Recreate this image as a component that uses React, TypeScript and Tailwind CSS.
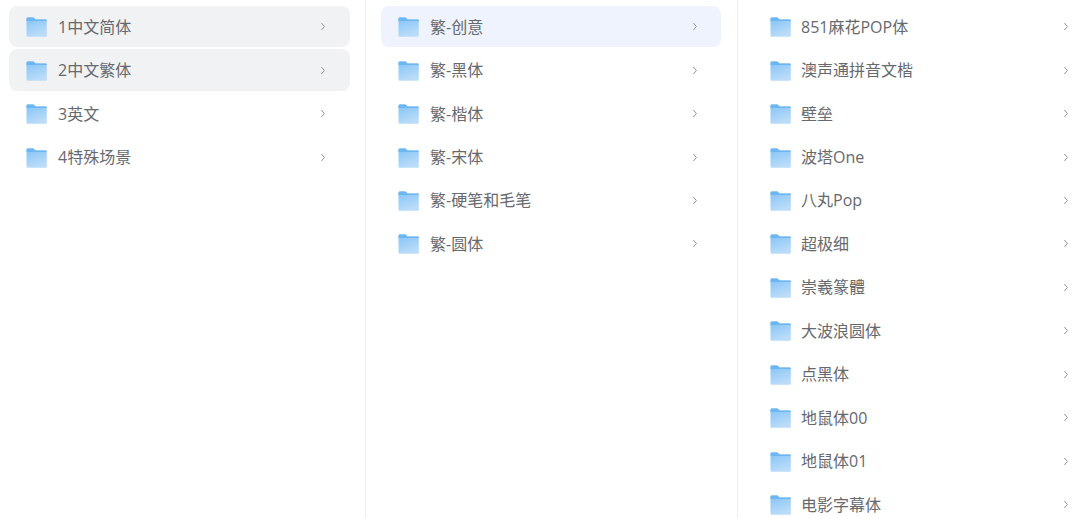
import React from 'react';

const col1 = ['1中文简体', '2中文繁体', '3英文', '4特殊场景'];
const col2 = ['繁-创意', '繁-黑体', '繁-楷体', '繁-宋体', '繁-硬笔和毛笔', '繁-圆体'];
const col3 = ['851麻花POP体', '澳声通拼音文楷', '壁垒', '波塔One', '八丸Pop', '超极细', '崇羲篆體', '大波浪圆体', '点黑体', '地鼠体00', '地鼠体01', '电影字幕体'];

function FolderIcon({ id }: { id: string }) {
    return (
        <svg className="w-[21px] h-[20px] shrink-0 mt-[1px]" viewBox="0 0 21 20" fill="none">
            <defs>
                <linearGradient id={id} x1="0" y1="0" x2="0.35" y2="1">
                    <stop offset="0" stopColor="#82c2f6" />
                    <stop offset="1" stopColor="#badcf9" />
                </linearGradient>
            </defs>
            <path d="M0.5 2C0.5 1 1.2 0.5 2 0.5H7.5L9.5 2.5H19.5C20.3 2.5 20.8 3 20.8 3.8V18.5C20.8 19.3 20.3 19.8 19.5 19.8H2C1.2 19.8 0.5 19.3 0.5 18.5Z" fill={`url(#${id})`} />
            <path d="M0.5 2C0.5 1 1.2 0.5 2 0.5H7.5L9.5 2.5H19.5C20.3 2.5 20.8 3 20.8 3.8V4H0.5Z" fill="#6cb6f2" />
        </svg>
    );
}

function Row({ label, id, className, textClass }: { label: string; id: string; className: string; textClass: string }) {
    return (
        <div className={`h-[41.45px] shrink-0 rounded-lg flex items-center ${className}`}>
            <FolderIcon id={id} />
            <span className={`flex-1 text-[16px] leading-none text-[#66696e] whitespace-nowrap ${textClass}`}>{label}</span>
            <svg className="w-[6px] h-[9px] shrink-0 text-[#8f949a]" viewBox="0 0 6 9" fill="none" stroke="currentColor" strokeWidth={1}>
                <path d="M1.4 1L4.4 4.5L1.4 8" />
            </svg>
        </div>
    );
}

export default function App() {
    return (
        <div className="w-[1080px] h-[518px] overflow-hidden bg-white flex font-['Open_Sans','Noto_Sans_CJK_SC',sans-serif]">
            {/* 第一列 */}
            <div className="w-[366px] shrink-0 border-r border-[#eeeff1] pt-[6px] pl-[9px] pr-[15px] flex flex-col gap-[2px]">
                {col1.map((item, i) => (
                    <Row key={item} label={item} id={`a${i}`} textClass="ml-[11px]" className={`pl-[17px] pr-[24px] ${i < 2 ? 'bg-[#f1f2f4]' : ''}`} />
                ))}
            </div>
            {/* 第二列 */}
            <div className="w-[372px] shrink-0 border-r border-[#eeeff1] pt-[6px] pl-[15px] pr-[16px] flex flex-col gap-[2px]">
                {col2.map((item, i) => (
                    <Row key={item} label={item} id={`b${i}`} textClass="ml-[11px]" className={`pl-[17px] pr-[23px] ${i === 0 ? 'bg-[#eff3fd]' : ''}`} />
                ))}
            </div>
            {/* 第三列 */}
            <div className="flex-1 pt-[6px] pl-[15px] flex flex-col gap-[2px]">
                {col3.map((item, i) => (
                    <Row key={item} label={item} id={`c${i}`} textClass="ml-[10px]" className="pl-[17px] pr-[11px]" />
                ))}
            </div>
        </div>
    );
}
